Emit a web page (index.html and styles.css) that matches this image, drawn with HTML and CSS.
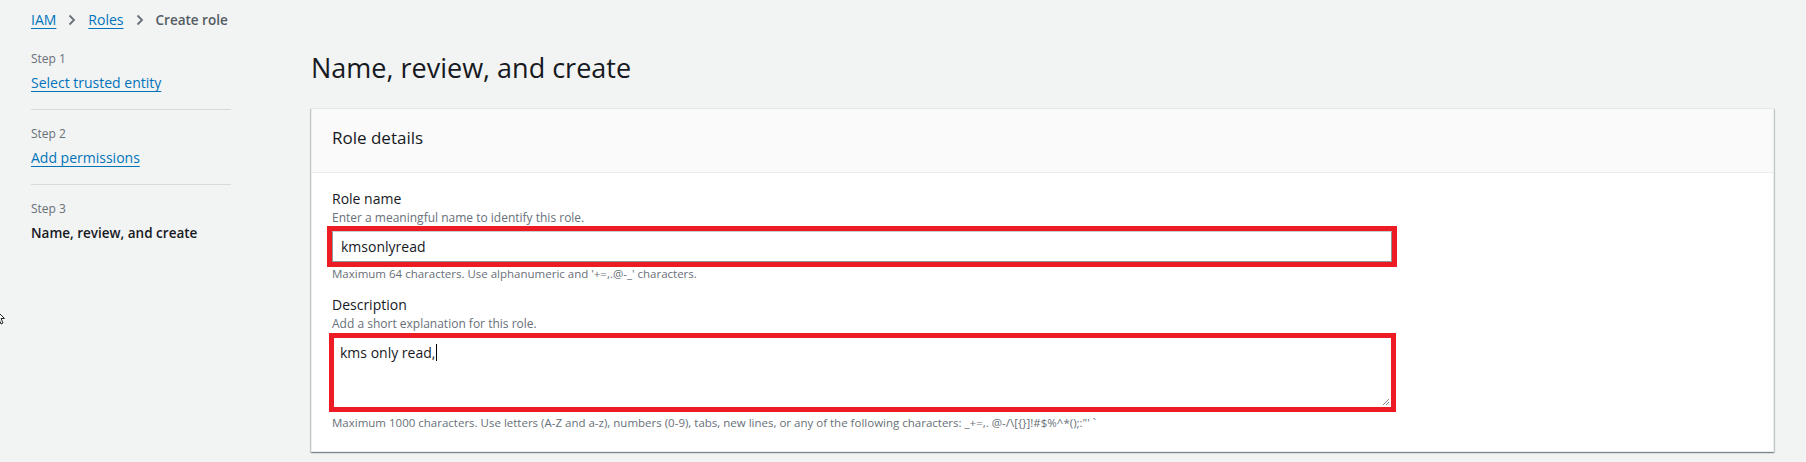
FILE: index.html
```html
<!DOCTYPE html>
<html lang="en">
<head>
<meta charset="utf-8">
<title>Create role</title>
<link rel="stylesheet" href="styles.css">
</head>
<body>
<nav class="breadcrumbs">
  <a class="crumb-link" href="#">IAM</a>
  <svg class="chev" width="8" height="12" viewBox="0 0 8 12"><path d="M1.5 1.5 L6 6 L1.5 10.5" fill="none" stroke="#687078" stroke-width="1.8"/></svg>
  <a class="crumb-link" href="#">Roles</a>
  <svg class="chev" width="8" height="12" viewBox="0 0 8 12"><path d="M1.5 1.5 L6 6 L1.5 10.5" fill="none" stroke="#687078" stroke-width="1.8"/></svg>
  <span class="crumb-current">Create role</span>
</nav>

<div class="layout">
  <aside class="steps">
    <div class="step">
      <div class="step-label">Step 1</div>
      <a class="step-link" href="#">Select trusted entity</a>
    </div>
    <div class="step">
      <div class="step-label">Step 2</div>
      <a class="step-link" href="#">Add permissions</a>
    </div>
    <div class="step step-last">
      <div class="step-label">Step 3</div>
      <div class="step-current">Name, review, and create</div>
    </div>
  </aside>

  <main class="main">
    <h1 class="page-title">Name, review, and create</h1>
    <section class="card">
      <header class="card-header">
        <h2 class="card-title">Role details</h2>
      </header>
      <div class="card-body">
        <div class="field">
          <div class="field-label">Role name</div>
          <div class="field-desc">Enter a meaningful name to identify this role.</div>
          <div class="mark mark-input">
            <div class="text-input">kmsonlyread</div>
          </div>
          <div class="field-constraint">Maximum 64 characters. Use alphanumeric and '+=,.@-_' characters.</div>
        </div>
        <div class="field field-second">
          <div class="field-label">Description</div>
          <div class="field-desc">Add a short explanation for this role.</div>
          <div class="mark mark-area">
            <div class="text-area">kms only read,<span class="caret"></span>
              <svg class="grip" width="8" height="8" viewBox="0 0 8 8"><path d="M7 1 L1 7 M7 4 L4 7 M7 6.5 L6.5 7" stroke="#888" stroke-width="1"/></svg>
            </div>
          </div>
          <div class="field-constraint">Maximum 1000 characters. Use letters (A-Z and a-z), numbers (0-9), tabs, new lines, or any of the following characters: _+=,. @-/\[{}]!#$%^*();:"' `</div>
        </div>
      </div>
    </section>
  </main>
</div>

<svg class="pointer" width="10" height="16" viewBox="0 0 10 16"><path d="M1 1 L1 13 L4 10 L6 15 L8 14 L6 9.5 L9.5 9.5 Z" fill="#fff" stroke="#222" stroke-width="1"/></svg>
</body>
</html>
```

FILE: styles.css
```css
* { box-sizing: border-box; }

html, body {
  margin: 0;
  padding: 0;
}

body {
  background: #f2f3f3;
  font-family: "Open Sans", "Liberation Sans", Arial, sans-serif;
  color: #16191f;
  width: 1806px;
  height: 462px;
  overflow: hidden;
  position: relative;
}

a { color: #0073bb; }

.breadcrumbs {
  display: flex;
  align-items: center;
  gap: 12px;
  padding: 10px 0 0 31px;
  height: 30px;
  font-size: 14px;
  line-height: 20px;
}

.crumb-link {
  text-decoration: underline;
  text-underline-offset: 3px;
  text-decoration-thickness: 1px;
}

.chev { display: block; }

.crumb-current {
  font-weight: 600;
  font-size: 13.5px;
  color: #545b64;
}

.layout {
  display: grid;
  grid-template-columns: 200px 1fr;
  column-gap: 80px;
  padding: 20px 32px 0 31px;
}

.steps {
  display: flex;
  flex-direction: column;
}

.step {
  display: flex;
  flex-direction: column;
  align-items: flex-start;
  gap: 4px;
  padding: 0 0 15px;
  border-bottom: 1px solid #d5dbdb;
  margin-bottom: 15px;
}

.step-last {
  border-bottom: none;
}

.step-label {
  font-size: 12px;
  line-height: 18px;
  color: #687078;
}

.step-link {
  font-size: 14px;
  line-height: 22px;
  text-decoration: underline;
  text-underline-offset: 3px;
  text-decoration-thickness: 1px;
}

.step-current {
  font-size: 13.5px;
  line-height: 22px;
  font-weight: 600;
}

.main {
  display: flex;
  flex-direction: column;
}

.page-title {
  margin: 0 0 22px;
  font-size: 27px;
  line-height: 36px;
  font-weight: 400;
  color: #16191f;
}

.card {
  background: #fff;
  border: 1px solid #eaeded;
  border-top-color: #e4e7e7;
  box-shadow: 0 1px 1px 0 rgba(0, 28, 36, 0.3), 1px 1px 1px 0 rgba(0, 28, 36, 0.15), -1px 1px 1px 0 rgba(0, 28, 36, 0.15);
}

.card-header {
  display: flex;
  align-items: center;
  height: 64px;
  padding: 0 20px 6px;
  background: #fafafa;
  border-bottom: 1px solid #eaeded;
}

.card-title {
  margin: 0;
  font-size: 17px;
  line-height: 24px;
  font-weight: 400;
}

.card-body {
  padding: 15px 20px 20px;
}

.field {
  display: flex;
  flex-direction: column;
  align-items: flex-start;
}

.field-second {
  margin-top: 12px;
}

.field-label {
  font-size: 14px;
  line-height: 22px;
}

.field-desc,
.field-constraint {
  font-size: 12px;
  line-height: 16px;
  color: #687078;
}

.field-constraint {
  font-size: 11.5px;
  margin-top: -1px;
}

.mark {
  border: 5px solid #ed1c24;
}

.mark-input {
  width: 1070px;
  margin-left: -5px;
}

.mark-area {
  width: 1067px;
  margin-left: -3px;
  margin-top: 1px;
  margin-bottom: 4px;
}

.text-input {
  height: 31px;
  padding: 0 8px;
  border: 1px solid #8d9899;
  border-top-color: #c8cece;
  font-size: 14px;
  line-height: 30px;
  background: #fff;
}

.text-area {
  position: relative;
  height: 69px;
  padding: 4px 6px;
  font-size: 14px;
  line-height: 22px;
  background: #fff;
}

.caret {
  display: inline-block;
  width: 1px;
  height: 17px;
  background: #000;
  vertical-align: -3px;
  margin-left: 1px;
}

.grip {
  position: absolute;
  right: 1px;
  bottom: 1px;
}

.pointer {
  position: absolute;
  left: -5px;
  top: 309px;
}
```
